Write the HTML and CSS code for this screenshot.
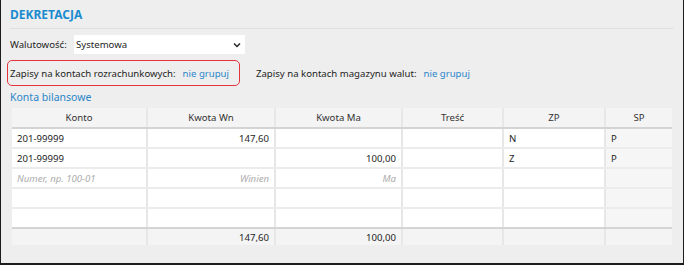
FILE: index.html
```html
<!DOCTYPE html>
<html lang="pl">
<head>
    <meta charset="UTF-8">
    <title>Dekretacja</title>
    <link rel="stylesheet" href="styles.css">
</head>
<body>
    <div class="panel">
        <h1 class="title">DEKRETACJA</h1>

        <div class="field-row">
            <span class="field-label">Walutowość:</span>
            <div class="select">
                <span>Systemowa</span>
                <svg class="chevron" width="8" height="6" viewBox="0 0 8 6"><polyline points="1,1.5 4,4.5 7,1.5" fill="none" stroke="#222" stroke-width="1.4"/></svg>
            </div>
        </div>

        <div class="group-row">
            <div class="group highlight">
                <span>Zapisy na kontach rozrachunkowych:</span>
                <a class="link">nie grupuj</a>
            </div>
            <div class="group">
                <span>Zapisy na kontach magazynu walut:</span>
                <a class="link">nie grupuj</a>
            </div>
        </div>

        <a class="section-link">Konta bilansowe</a>

        <table class="grid">
            <colgroup>
                <col style="width:135px">
                <col style="width:128px">
                <col style="width:127px">
                <col style="width:101px">
                <col style="width:102px">
                <col style="width:67px">
            </colgroup>
            <thead>
                <tr>
                    <th>Konto</th>
                    <th>Kwota Wn</th>
                    <th>Kwota Ma</th>
                    <th>Treść</th>
                    <th>ZP</th>
                    <th>SP</th>
                </tr>
            </thead>
            <tbody>
                <tr>
                    <td>201-99999</td>
                    <td class="num">147,60</td>
                    <td class="num"></td>
                    <td></td>
                    <td>N</td>
                    <td class="sp">P</td>
                </tr>
                <tr>
                    <td>201-99999</td>
                    <td class="num"></td>
                    <td class="num">100,00</td>
                    <td></td>
                    <td>Z</td>
                    <td class="sp">P</td>
                </tr>
                <tr class="placeholder">
                    <td>Numer, np. 100-01</td>
                    <td class="num">Winien</td>
                    <td class="num">Ma</td>
                    <td></td>
                    <td></td>
                    <td class="sp"></td>
                </tr>
                <tr>
                    <td></td>
                    <td></td>
                    <td></td>
                    <td></td>
                    <td></td>
                    <td class="sp"></td>
                </tr>
                <tr class="last">
                    <td></td>
                    <td></td>
                    <td></td>
                    <td></td>
                    <td></td>
                    <td class="sp"></td>
                </tr>
            </tbody>
            <tfoot>
                <tr>
                    <td></td>
                    <td class="num">147,60</td>
                    <td class="num">100,00</td>
                    <td></td>
                    <td></td>
                    <td></td>
                </tr>
            </tfoot>
        </table>
    </div>
</body>
</html>
```

FILE: styles.css
```css
body {
    margin: 0;
    background: #ffffff;
    font-family: "Noto Sans", "Open Sans", sans-serif;
    font-size: 9.6px;
    color: #1e1e1e;
}

.panel {
    box-sizing: border-box;
    width: 684px;
    height: 265px;
    background: #eeeeee;
    border: solid #1c1c1c;
    border-width: 0 1px 2px 1px;
    padding: 0 10px 0 9px;
}

/* header */
.title {
    margin: 0;
    padding: 7px 0 0 0;
    height: 21px;
    font-size: 12px;
    font-weight: bold;
    color: #1b8bd0;
    border-bottom: 1px solid #dfdfdf;
    line-height: 16px;
}

.field-row {
    display: flex;
    align-items: center;
    margin-top: 6px;
}

.field-label {
    width: 64px;
}

.select {
    box-sizing: border-box;
    width: 171px;
    height: 19px;
    background: #fff;
    display: flex;
    align-items: center;
    justify-content: space-between;
    padding: 0 4px 0 2px;
}

.chevron {
    display: block;
}

/* grouping options */
.group-row {
    display: flex;
    align-items: center;
    margin-top: 6px;
    height: 26px;
}

.group {
    display: flex;
    align-items: center;
    gap: 7px;
}

.highlight {
    box-sizing: border-box;
    height: 26px;
    width: 233px;
    margin-left: -3px;
    padding-left: 2px;
    border: 1.5px solid #e3343d;
    border-radius: 5px;
    margin-right: 16px;
}

.link {
    color: #2a86c9;
}

.section-link {
    display: block;
    color: #2a86c9;
    font-size: 10.5px;
    line-height: 14px;
    margin-top: 4px;
}

/* table */
.grid {
    margin: 4px 0 0 2px;
    width: 660px;
    table-layout: fixed;
    border-collapse: collapse;
}

.grid th,
.grid td {
    box-sizing: border-box;
    height: 20px;
    padding: 0 5px;
    border-right: 2px solid #e7e7e7;
    border-bottom: 2px solid #ececec;
    white-space: nowrap;
    overflow: hidden;
}

.grid th:last-child,
.grid td:last-child {
    border-right: none;
}

.grid th {
    background: #f4f4f4;
    font-weight: normal;
    color: #333;
    text-align: center;
    border-bottom: 2px solid #d4d4d4;
}

.grid td {
    background: #fff;
    text-align: left;
}

.grid td.sp {
    background: #f6f6f6;
}

.grid td.num {
    text-align: right;
}

.grid tr.last td {
    border-bottom: 2px solid #d4d4d4;
}

.placeholder td {
    color: #acacac;
    font-style: italic;
}

.grid tfoot td {
    height: 17px;
    background: #f4f4f4;
    border-bottom: none;
}
```
